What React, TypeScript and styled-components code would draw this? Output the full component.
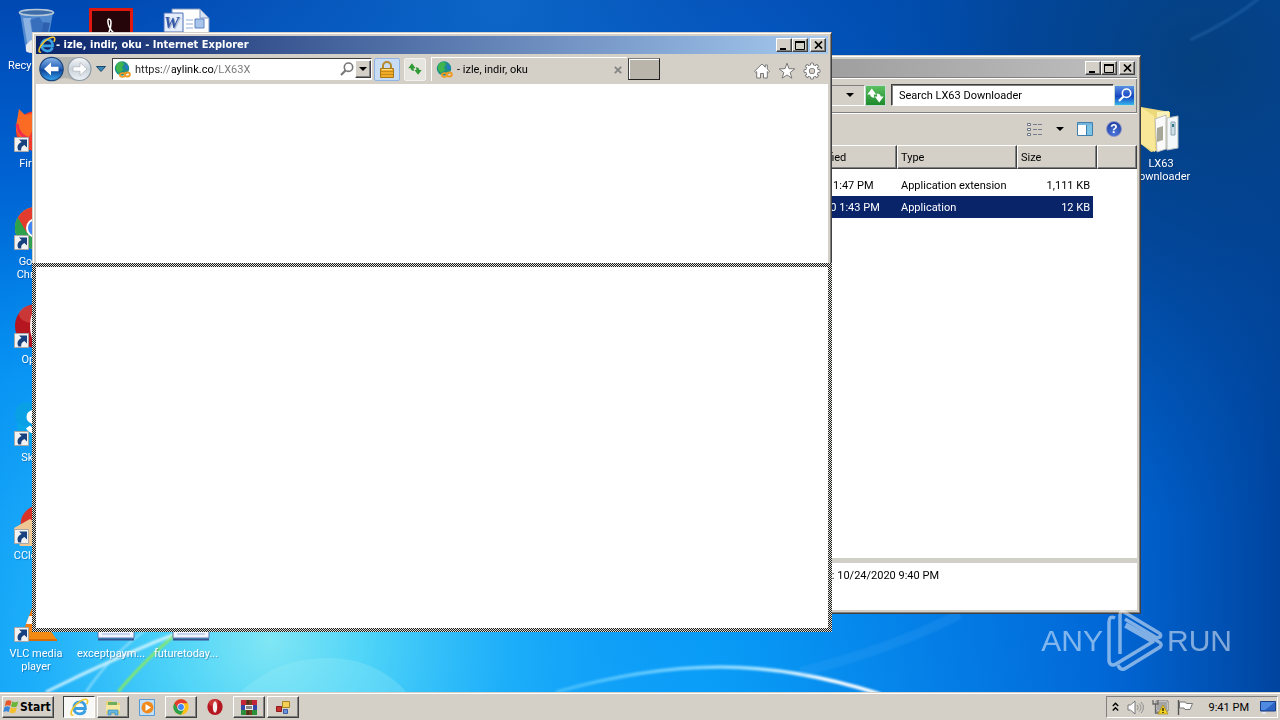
import React from "react";
import styled, { createGlobalStyle, css } from "styled-components";

const FACE = "#d4d0c8";

const GlobalStyle = createGlobalStyle`
  * { box-sizing: border-box; }
  body { margin: 0; font: 11px/13px Roboto, "Liberation Sans", sans-serif; color: #000; }
  button, input { font: inherit; color: inherit; padding: 0; margin: 0; border: 0; background: none; }
  button { cursor: default; }
  svg { display: block; flex: none; }
`;

/* ---------- shell ---------- */

const Screen = styled.div`
  display: flex;
  flex-direction: column;
  min-height: 100vh;
  overflow: hidden;
`;

const Desktop = styled.main`
  position: relative;
  flex: 1;
  min-height: 640px;
  overflow: hidden;
  background: #0a78e0;
`;

const WallpaperArt = styled.svg`
  position: absolute;
  inset: 0;
  width: 100%;
  height: 100%;
`;

const IconGrid = styled.div`
  position: relative;
  display: grid;
  grid-template-columns: repeat(16, 72px);
  grid-template-rows: repeat(7, 98px);
  column-gap: 3px;
`;

const Shortcut = styled.a<{ $col: number; $row: number }>`
  grid-column: ${(p) => p.$col};
  grid-row: ${(p) => p.$row};
  display: flex;
  flex-direction: column;
  align-items: center;
  gap: 3px;
  padding-top: 8px;
  color: #fff;
  text-align: center;
  text-decoration: none;
  text-shadow: 1px 1px 1px rgba(0, 30, 90, 0.35);
`;

const raised = css`
  border: 1px solid;
  border-color: #fff #404040 #404040 #fff;
  box-shadow: inset -1px -1px 0 #808080;
`;

const sunken = css`
  border: 1px solid;
  border-color: #808080 #fff #fff #808080;
`;

/* ---------- windows ---------- */

const WindowFrame = styled.section<{ $left: number; $top: number; $width: number; $height: number }>`
  position: absolute;
  left: ${(p) => p.$left}px;
  top: ${(p) => p.$top}px;
  width: ${(p) => p.$width}px;
  height: ${(p) => p.$height}px;
  display: flex;
  flex-direction: column;
  padding: 3px;
  background: ${FACE};
  border: 1px solid;
  border-color: ${FACE} #404040 #404040 ${FACE};
  box-shadow: inset 1px 1px 0 #fff, inset -1px -1px 0 #808080;
`;

const TitleBar = styled.header<{ $active?: boolean }>`
  display: flex;
  align-items: center;
  height: 18px;
  padding: 0 2px;
  color: #fff;
  font: bold 11px/18px "DejaVu Sans Condensed", "DejaVu Sans", sans-serif;
  background: ${(p) =>
    p.$active ? "linear-gradient(90deg, #0a246a, #a6caf0)" : "linear-gradient(90deg, #808080, #c0c0c0)"};
`;

const TitleText = styled.h1`
  flex: 1;
  margin: 0;
  font: inherit;
  white-space: nowrap;
`;

const CaptionButton = styled.button<{ $gap?: boolean }>`
  ${raised}
  display: grid;
  place-items: center;
  width: 16px;
  height: 14px;
  margin-left: ${(p) => (p.$gap ? 2 : 0)}px;
  background: ${FACE};
`;

const Page = styled.div`
  flex: 1;
  background: #fff;
`;

/* the checkered rectangle shown while a window is being dragged */
const DragOutline = styled.div`
  position: absolute;
  inset: 230px -1px -1px -1px;
  padding: 4px;
  background: repeating-conic-gradient(#e4e2dd 0 25%, #1c1c1c 0 50%) 0 0 / 2px 2px;
`;

const DragInside = styled.div`
  height: 100%;
  background: #fff;
`;

/* ---------- browser toolbar ---------- */

const BrowserBar = styled.div`
  display: flex;
  align-items: center;
  height: 30px;
  padding: 0 7px 0 3px;
`;

const NavButtons = styled.div`
  display: flex;
  align-items: center;
  gap: 1px;
  width: 73px;
`;

const AddressBox = styled.label`
  display: flex;
  align-items: center;
  width: 260px;
  height: 22px;
  padding: 1px 0 1px 1px;
  background: #fff;
  border: 1px solid;
  border-color: #404040 #fff #fff #404040;
`;

const AddressInput = styled.input`
  flex: 1;
  min-width: 0;
  height: 18px;
  margin-left: 4px;
  outline: 0;
  background: linear-gradient(90deg, #222 28px, #777 28px 37px, #000 37px 80px, #777 80px);
  background-clip: text;
  -webkit-background-clip: text;
  -webkit-text-fill-color: transparent;
`;

const DropButton = styled.button`
  ${raised}
  display: grid;
  place-items: center;
  width: 16px;
  height: 18px;
  margin-left: 1px;
  background: ${FACE};
`;

const BarTool = styled.button<{ $tone: "lock" | "reload" }>`
  display: grid;
  place-items: center;
  width: ${(p) => (p.$tone === "lock" ? 26 : 22)}px;
  height: 23px;
  margin-left: ${(p) => (p.$tone === "lock" ? 2 : 4)}px;
  border: 1px solid ${(p) => (p.$tone === "lock" ? "#8fb4e2" : "#f4f2ee")};
  border-radius: 2px;
  background: ${(p) => (p.$tone === "lock" ? "#c8dcf4" : "#e6e4de")};
`;

const Tab = styled.div`
  display: flex;
  align-items: center;
  width: 196px;
  height: 24px;
  margin-left: 5px;
  padding: 0 5px 0 4px;
  border: 1px solid #fff;
  border-width: 1px 0 0 1px;
`;

const TabTitle = styled.span`
  flex: 1;
  margin-left: 4px;
`;

const NewTab = styled.button`
  width: 32px;
  height: 22px;
  margin-left: 1px;
  background: #bab5ab;
  border: 1px solid;
  border-color: #808080 #202020 #202020 #404040;
  box-shadow: inset 1px 1px 0 #fff;
`;

const BrowserActions = styled.div`
  display: flex;
  gap: 7px;
  margin-left: auto;
  padding-top: 3px;
`;

/* ---------- file explorer ---------- */

const LocationRow = styled.div`
  display: flex;
  align-items: center;
  height: 36px;
  padding: 0 2px 0 4px;
  border-top: 1px solid #808080;
  border-bottom: 1px solid #808080;
  box-shadow: inset 0 1px 0 #fff, inset -1px 0 0 #808080, 0 1px 0 #fff;
`;

const PathBox = styled.div`
  ${sunken}
  display: flex;
  flex: 1;
  align-items: center;
  justify-content: flex-end;
  height: 21px;
  padding-right: 10px;
`;

const SearchInput = styled.input`
  width: 223px;
  height: 22px;
  margin-left: 5px;
  padding-left: 7px;
  background: #fff;
  border: 1px solid;
  border-color: #404040 #fff #fff #404040;
  box-shadow: inset 1px 1px 0 #808080;
  outline: 0;
  &::placeholder { color: #000; opacity: 1; }
`;

const ColorButton = styled.button<{ $color: string }>`
  display: grid;
  place-items: center;
  width: 21px;
  height: 21px;
  background: ${(p) => p.$color};
  border: 1px solid #c5dcd0;
`;

const CommandRow = styled.div`
  display: flex;
  align-items: center;
  justify-content: flex-end;
  height: 32px;
  padding-right: 15px;
  gap: 13px;
`;

const PlainButton = styled.button`
  display: block;
`;

const FileArea = styled.div`
  flex: 1;
  background: #fff;
`;

const FileTable = styled.table`
  width: 100%;
  table-layout: fixed;
  border-collapse: separate;
  border-spacing: 0;

  thead::after { content: ""; display: block; height: 5px; }
`;

const HeadCell = styled.th<{ $width?: number }>`
  ${raised}
  width: ${(p) => (p.$width ? `${p.$width}px` : "auto")};
  height: 24px;
  padding: 0 0 0 3px;
  font-weight: normal;
  text-align: left;
  background: ${FACE};
`;

const Row = styled.tr<{ $selected?: boolean }>`
  height: 22px;
  color: ${(p) => (p.$selected ? "#fff" : "#000")};
  td:not(:last-child) { background: ${(p) => (p.$selected ? "#0a246a" : "none")}; background-clip: padding-box; }
`;

const Cell = styled.td<{ $size?: boolean }>`
  padding: 0 3px 0 4px;
  text-align: ${(p) => (p.$size ? "right" : "left")};
  border-right: ${(p) => (p.$size ? "4px solid transparent" : "0")};
  white-space: nowrap;
`;

const Details = styled.footer`
  height: 52px;
  padding: 6px 198px 0 0;
  text-align: right;
  background: #fff;
  border-top: 5px solid #d0d0c8;
  white-space: nowrap;
`;

/* ---------- watermark ---------- */

const Watermark = styled.div`
  position: absolute;
  right: 48px;
  bottom: 20px;
  display: flex;
  align-items: center;
  gap: 4px;
  color: #fff;
  opacity: 0.5;
  font: 30px/62px "Liberation Sans", sans-serif;
`;

/* ---------- taskbar ---------- */

const Taskbar = styled.nav`
  display: flex;
  align-items: center;
  height: 28px;
  padding: 1px 2px 0 2px;
  background: ${FACE};
  border-top: 1px solid ${FACE};
  box-shadow: inset 0 1px 0 #fff;
`;

const StartButton = styled.button`
  ${raised}
  display: flex;
  align-items: center;
  width: 52px;
  height: 22px;
  margin-right: 9px;
  background: ${FACE};
  font: bold 12px/18px "DejaVu Sans Condensed", "DejaVu Sans", sans-serif;
`;

const TaskList = styled.div`
  display: flex;
  gap: 2px;
`;

const TaskButton = styled.button<{ $kind: "active" | "open" | "pinned" }>`
  display: grid;
  place-items: center;
  width: 32px;
  height: 22px;
  ${(p) => p.$kind === "open" && raised}
  ${(p) =>
    p.$kind === "active" &&
    css`
      border: 1px solid;
      border-color: #404040 #fff #fff #404040;
      background: #f8f8f6;
    `}
`;

const Tray = styled.div`
  ${sunken}
  display: flex;
  align-items: center;
  height: 22px;
  margin-left: auto;
  padding: 0 1px 0 5px;
  gap: 8px;
`;

const Clock = styled.time`
  margin: 0 3px 0 7px;
`;

/* ---------- icons ---------- */

const Triangle = ({ color = "#000" }: { color?: string }) => (
  <svg width="8" height="4" viewBox="0 0 8 4"><path d="M0 0h8L4 4z" fill={color} /></svg>
);

const MinGlyph = () => <svg width="10" height="9"><path d="M1 7h6v2H1z" /></svg>;
const MaxGlyph = () => <svg width="10" height="9"><path d="M.5 1h9v7.5h-9z" fill="none" stroke="#000" /><path d="M0 0h10v2H0z" /></svg>;
const CloseGlyph = () => <svg width="9" height="8" viewBox="0 0 9 8"><path d="M1 .5l7 7M8 .5l-7 7" stroke="#000" strokeWidth="1.7" /></svg>;

const Captions = () => (
  <>
    <CaptionButton aria-label="Minimize"><MinGlyph /></CaptionButton>
    <CaptionButton aria-label="Maximize"><MaxGlyph /></CaptionButton>
    <CaptionButton aria-label="Close" $gap><CloseGlyph /></CaptionButton>
  </>
);

const IeLogo = ({ size }: { size: number }) => (
  <svg width={size} height={size} viewBox="0 0 20 20">
    <path d="M4.6 11h11.6c.3-4-2-6.900-5.900-6.900-3.600 0-6.200 2.700-6.200 6.300s2.600 6.300 6.300 6.300c2.700 0 4.800-1.400 5.600-3.800" fill="none" stroke="#3b9fe2" strokeWidth="3" />
    <path d="M3.500 18C.4 18.800.3 15 3.400 10.500 7.300 4.900 14 .5 17.300 1.500c2 .6 1.600 3 .3 5" fill="none" stroke="#f3c62c" strokeWidth="1.700" />
  </svg>
);

const Globe = () => (
  <svg width="17" height="17" viewBox="0 0 17 17">
    <circle cx="8" cy="7.500" r="7.200" fill="#1c8f86" />
    <path d="M3 3c3-3 6-2 7 0L8 6l1 3-4 3C2 10 1 6 3 3z" fill="#3fb54f" />
    <path d="M11 3c3 1 4 4 3 6l-3-2z" fill="#2878c8" />
    <g fill="none" stroke="#f09a24" strokeWidth="1.800">
      <ellipse cx="8.500" cy="14" rx="2.600" ry="1.800" /><ellipse cx="13.300" cy="13.500" rx="2.600" ry="2" />
    </g>
  </svg>
);

const BackForward = () => (
  <svg width="56" height="26" viewBox="0 0 56 26">
    <defs>
      <linearGradient id="back" x1="0" y1="0" x2="0" y2="1"><stop offset="0" stopColor="#8bb6e8" /><stop offset=".45" stopColor="#2a68bd" /><stop offset=".55" stopColor="#0d459c" /><stop offset="1" stopColor="#38a8f0" /></linearGradient>
      <linearGradient id="fwd" x1="0" y1="0" x2="0" y2="1"><stop offset="0" stopColor="#f7f8fa" /><stop offset=".5" stopColor="#c9d2da" /><stop offset="1" stopColor="#eef3f7" /></linearGradient>
    </defs>
    <path d="M12 1h28a12 12 0 0 1 0 24c-7 0-9-3-14-3s-7 3-14 3z" fill="#b4b4b0" />
    <circle cx="12.500" cy="13" r="11.700" fill="url(#back)" stroke="#1e477f" strokeWidth="1.200" />
    <path d="M5 13l7-6.500v4.300h7.500v4.400H12v4.300z" fill="#fff" />
    <circle cx="40.500" cy="13" r="11.500" fill="url(#fwd)" stroke="#8f9aa4" strokeWidth="1.200" />
    <path d="M48 13l-7-6.500v4.300h-7v4.400h7v4.300z" fill="#fff" stroke="#a9b2ba" strokeWidth=".7" />
  </svg>
);

const Magnifier = ({ color = "#777", size = 14 }: { color?: string; size?: number }) => (
  <svg width={size} height={size} viewBox="0 0 14 14" fill="none" stroke={color}>
    <circle cx="8.500" cy="5.200" r="4.200" strokeWidth="1.600" /><path d="M5.500 8.500L1 13" strokeWidth="2.200" />
  </svg>
);

const Padlock = () => (
  <svg width="14" height="17" viewBox="0 0 14 17">
    <path d="M3 8V5a4 4 0 0 1 8 0v3" fill="none" stroke="#b58a2c" strokeWidth="2" />
    <path d="M.5 7.500h13v9H.5z" fill="#f0ac28" stroke="#a87818" />
    <path d="M1 10.500h12M1 13.500h12" stroke="#c88a18" /><path d="M2 8.500h10" stroke="#ffe08a" />
  </svg>
);

const ReloadArrows = ({ color = "#2f9a36", size = 14 }: { color?: string; size?: number }) => (
  <svg width={size} height={size} viewBox="0 0 16 16" fill={color}>
    <path d="M4.500 1.500L.3 7H3c.3 2 1.500 3 4 3L6.300 7h2.400z" />
    <path d="M11.500 14.500L15.700 9H13c-.3-2-1.500-3-4-3l.7 3H7.300z" />
  </svg>
);

const HomeIcon = () => (
  <svg width="18" height="18" viewBox="0 0 18 18"><path d="M9 2L1.500 9.200l1.200 1.300 1-.9V16h3.800v-4.500h3V16h3.800V9.600l1 .9 1.200-1.300-2.200-2.100V3h-2v2.200z" fill="#fff" stroke="#777" /></svg>
);
const StarIcon = () => (
  <svg width="18" height="18" viewBox="0 0 18 18"><path d="M9 1.200l2 5.500 5.800.2-4.600 3.600 1.600 5.700L9 12.900l-4.800 3.300 1.600-5.700L1.200 6.900 7 6.700z" fill="#fff" stroke="#777" /></svg>
);

const teeth = [0, 45, 90, 135, 180, 225, 270, 315];
const GearIcon = () => (
  <svg width="18" height="18" viewBox="0 0 18 18">
    {teeth.map((a) => <path key={a} d="M7.300 4l.5-3h2.400l.5 3z" fill="#fff" stroke="#777" transform={`rotate(${a} 9 9)`} />)}
    <circle cx="9" cy="9" r="4.400" fill="none" stroke="#777" strokeWidth="4.200" />
    <circle cx="9" cy="9" r="4.500" fill="none" stroke="#fff" strokeWidth="2.800" />
    {teeth.map((a) => <path key={a} d="M8 4.500l.3-2.800h1.400l.3 2.800z" fill="#fff" transform={`rotate(${a} 9 9)`} />)}
  </svg>
);

const ListIcon = () => (
  <svg width="16" height="13" viewBox="0 0 16 13">
    {[0, 5, 10].map((y) => (
      <g key={y}><path d={`M.5 ${y + 0.5}h3v2h-3z`} fill="#fff" stroke="#6b7484" /><path d={`M6 ${y + 1.5}h4m1 0h4`} stroke="#757d8c" /></g>
    ))}
  </svg>
);

const PaneIcon = () => (
  <svg width="16" height="14" viewBox="0 0 16 14">
    <path d="M.5.5h15v13H.5z" fill="#fff" stroke="#3f7fae" /><path d="M1 1h14v2H1z" fill="#73b4dc" /><path d="M10 3h5v10h-5z" fill="#7cc4e4" /><path d="M9.500 3v10" stroke="#3f7fae" />
  </svg>
);

const QuestionText = styled.span`
  display: grid;
  place-items: center;
  width: 16px;
  height: 16px;
  border: 1px solid #8794cb;
  border-radius: 50%;
  color: #fff;
  font: bold 12px/14px "Liberation Sans", sans-serif;
  background: radial-gradient(circle at 50% 80%, #4c78dc, #1b3596);
`;

const LinkBadge = () => (
  <g>
    <path d="M2.500 31.500h14v14h-14z" fill="#f2f2f2" stroke="#a8a8a8" />
    <path d="M7 33.500h8v8l-2.600-2.600c-2.400 1-3.400 2.600-3.200 5.600H6.500C4.400 41 5.800 37.500 9.600 36z" fill="#17427f" />
  </g>
);

const ShortcutArt = ({ link, children }: { link?: boolean; children: React.ReactNode }) => (
  <svg width="48" height="48" viewBox="0 0 48 48">{children}{link && <LinkBadge />}</svg>
);

const RecycleArt = () => (
  <ShortcutArt>
    <path d="M8 5l6 38c1 3 19 3 20 0l7-38z" fill="#5f94d2" fillOpacity=".85" />
    <path d="M11 10l5 30 6-4-3-26z" fill="#b4cfec" fillOpacity=".6" /><path d="M18 12l9-3 6 8-4 10-9-3z" fill="#2e65b5" fillOpacity=".7" /><path d="M32 14l6 1-4 18-5-3z" fill="#2458a8" fillOpacity=".8" />
    <path d="M14 37l5-5 8 4 6-3-1 10c-3 3-16 3-18 0z" fill="#e6e9ee" />
    <ellipse cx="24.500" cy="4.500" rx="17" ry="3" fill="#3d6ca8" stroke="#b4c8da" strokeWidth="1.600" />
  </ShortcutArt>
);

const AcrobatArt = () => (
  <ShortcutArt>
    <path d="M2 0h44v48H2z" fill="#e0190f" /><path d="M5 3h38v45H5z" fill="#25050a" />
    <path d="M15 34c6-6 9-13 9-19 0-5-4-5-3-1 0 6 7 14 13 16" fill="none" stroke="#fff" strokeWidth="1.500" />
  </ShortcutArt>
);

const LetterW = styled.text`
  font: italic bold 17px "Liberation Serif", serif;
  fill: #3457a8;
`;

const WordArt = () => (
  <ShortcutArt>
    <path d="M10 1h28l9 9v38H10z" fill="#fff" stroke="#7c95bd" /><path d="M38 1v9h9z" fill="#d7e3f5" stroke="#7c95bd" />
    <path d="M24 12h7M24 16h7M24 20h7M24 25h20" stroke="#93add8" /><path d="M33 11h9v9h-9z" fill="#a9c4ea" stroke="#5b82c0" />
    <path d="M2 5h19v19H2z" fill="#e6eefb" stroke="#4a6cb4" /><LetterW x="2" y="20">W</LetterW>
  </ShortcutArt>
);

const PaperArt = () => (
  <ShortcutArt>
    <path d="M11 2h36v40H11z" fill="#eef3fc" stroke="#5b77b4" /><path d="M15 34h28M15 38h28" stroke="#9fb3dc" /><path d="M11 43.500h36" stroke="#39558f" strokeWidth="2" />
  </ShortcutArt>
);

const FirefoxArt = () => (
  <ShortcutArt link>
    <circle cx="24" cy="25" r="20" fill="#f23a2a" /><path d="M4 20L7 3l6 6 9-2 2 10-8 16C8 34 3 26 4 20z" fill="#fb6b23" /><path d="M20 20c4-4 8-4 12 0v14H20z" fill="#8b2ac4" /><path d="M5 18c1 8 5 13 13 15" stroke="#f0304a" strokeWidth="3" fill="none" />
  </ShortcutArt>
);

const ChromeMark = () => (
  <g>
    <circle cx="24" cy="24" r="21" fill="#fbc116" />
    <path d="M5.800 13.500A21 21 0 0 0 24 45L33 29 24 24z" fill="#2da14c" />
    <path d="M5.800 13.500A21 21 0 0 1 42.200 13.500H24L15 29z" fill="#e33b2e" />
    <circle cx="24" cy="24" r="10" fill="#fff" /><circle cx="24" cy="24" r="8" fill="#4285f4" />
  </g>
);

const OperaMark = () => (
  <g><ellipse cx="24" cy="24" rx="21" ry="22" fill="#b51620" /><ellipse cx="20" cy="12" rx="13" ry="9" fill="#e0584e" fillOpacity=".5" /><ellipse cx="24" cy="24" rx="6" ry="16" fill="#f5f1f0" /></g>
);

const SkypeArt = () => (
  <ShortcutArt link>
    <circle cx="24" cy="24" r="19" fill="#0aa6ea" /><circle cx="15" cy="14" r="12" fill="#0aa0e6" />
    <path d="M31 15c-4-4-14-4-14 2 0 7 15 4 15 10 0 6-12 6-16 0" fill="none" stroke="#fff" strokeWidth="5" />
  </ShortcutArt>
);

const CleanerArt = () => (
  <ShortcutArt link>
    <path d="M36 8A20 20 0 0 0 9 30l10-2a10 10 0 0 1 10-11z" fill="#d9342a" /><path d="M2 30l16-9 10 7-6 20H8z" fill="#efc795" />
  </ShortcutArt>
);

const VlcArt = () => (
  <ShortcutArt link>
    <path d="M24 1l14 38H10z" fill="#f47a12" /><path d="M17 20h14l3 8H14z" fill="#f6f3ee" /><path d="M10 34h28l7 10H3z" fill="#f08a12" /><path d="M3 43h42v2H3z" fill="#d86a08" />
  </ShortcutArt>
);

const FolderArt = () => (
  <ShortcutArt>
    <path d="M4 1l29 5v36L14 46 4 38z" fill="#ecd97c" /><path d="M20 6l12-1v8l-12 4z" fill="#fbf2b8" />
    <path d="M18 13l11-4v34l-9 3z" fill="#fafafa" stroke="#bbb" /><path d="M20 22l6-2v14l-6 2z" fill="#a8a89a" />
    <path d="M30 12l11-2v32l-11 2z" fill="#f5f8fa" stroke="#b5bcc2" /><path d="M34 16h4v13h-4z" fill="#d2dde4" stroke="#8ba6b4" /><path d="M35 18h2v3h-2z" fill="#2e7a8c" />
    <path d="M4 1l13 9 1 36L4 38z" fill="#f8e897" />
  </ShortcutArt>
);

const WindowsFlag = () => (
  <svg width="17" height="16" viewBox="0 0 17 16">
    <path d="M3 2c2-1.300 4-1 5.500 0L7.300 7C5.600 6 4 6 1.800 7z" fill="#e8572a" /><path d="M9.300 2.400c2 1 3.800 1 6-.2L14 7.300c-2 1.200-4 1-6 .1z" fill="#6cb53a" />
    <path d="M1.500 8c2-1.200 4-1 5.600 0L5.800 13c-1.700-1-3.600-1-5.500 0z" fill="#3b86d8" /><path d="M7.800 8.300c2 1 4 1 6-.1L12.500 13.300c-2 1.200-4 1.100-6 .1z" fill="#f3bf2c" />
  </svg>
);

const FolderTask = () => (
  <svg width="18" height="18" viewBox="0 0 18 18"><path d="M2 3h6l1 2h7v11H2z" fill="#ecd377" /><path d="M4 4h9v4H4z" fill="#6cae5c" /><path d="M2 7h14v6H2z" fill="#f6e8a2" /><path d="M4 17v-5h10v5h-3v-2H7v2z" fill="#66b5e0" stroke="#2f84b8" strokeWidth=".6" /></svg>
);

const MediaTask = () => (
  <svg width="17" height="17" viewBox="0 0 17 17"><path d="M.5.500h15v16H.5z" fill="#c2dff6" stroke="#5a9ad4" /><circle cx="8.500" cy="8.500" r="6" fill="#f08a1c" /><path d="M6.500 5l5.500 3.500-5.500 3.500z" fill="#fff" /></svg>
);

const ArchiveTask = () => (
  <svg width="18" height="17" viewBox="0 0 18 17"><path d="M1 1h16v5H1z" fill="#c22638" /><path d="M1 6h16v5H1z" fill="#3548a8" /><path d="M1 11h16v5H1z" fill="#2c8f3a" /><path d="M6 1h6v15H6z" fill="#70401c" /><path d="M5 6h8v5H5z" fill="#eee" /><path d="M7 7v3M9 7v3M11 7v3M8 1v4M8 12v4" stroke="#222" /></svg>
);

const FormsTask = () => (
  <svg width="18" height="17" viewBox="0 0 18 17"><path d="M2.500 7.500h5v5h-5z" fill="#c93030" stroke="#8b1c1c" /><path d="M8.500 2.500h7v6h-7z" fill="#f3cf57" stroke="#a88420" /><path d="M9.500 10.500h4v4h-4z" fill="#6d93dc" stroke="#3b5ba5" /></svg>
);

const ChevronIcon = () => <svg width="7" height="10" viewBox="0 0 7 10" fill="none" stroke="#000" strokeWidth="1.400"><path d="M.8 4l2.700-2.700L6.200 4M.8 8.500l2.700-2.700L6.200 8.500" /></svg>;
const SpeakerIcon = () => (
  <svg width="17" height="15" viewBox="0 0 17 15"><path d="M1 5h2.500L8 1v13l-4.500-4H1z" fill="#fff" stroke="#777" /><path d="M10 5c1.500 1.500 1.500 3.500 0 5M12 3.500c2.500 2.500 2.500 5.500 0 8M14 2c3.200 3.500 3.200 7.500 0 11" fill="none" stroke="#888" /></svg>
);
const NetworkIcon = () => (
  <svg width="17" height="16" viewBox="0 0 17 16"><path d="M4.500 2.500h11v9h-11z" fill="#a4a4a4" stroke="#fff" /><path d="M4 2h12v10H4z" fill="none" stroke="#555" strokeWidth=".7" /><path d="M1 1v4h5V1M3.500 5v9H7" fill="none" stroke="#666" strokeWidth="1.300" /><path d="M11 6l5 9H6z" fill="#f5d120" stroke="#a88a10" strokeWidth=".7" /><path d="M11 9v3m0 1v1" stroke="#000" strokeWidth="1.200" /></svg>
);
const FlagIcon = () => (
  <svg width="17" height="15" viewBox="0 0 17 15"><path d="M2.500 2h6l1 1.500h6l-2.500 6H8L7 8H2.500z" fill="#fff" stroke="#777" /><path d="M1.500 0v15" stroke="#555" strokeWidth="1.400" /></svg>
);
const MonitorIcon = () => (
  <svg width="16" height="13" viewBox="0 0 16 13"><path d="M.5.500h15v9.500H.5z" fill="#2b62c4" stroke="#173e86" /><path d="M1 1h14L5 9H1z" fill="#4f8ae0" /><path d="M2 12h4" stroke="#e8eef8" strokeWidth="1.500" /></svg>
);

const PlayLogo = () => (
  <svg width="56" height="62" viewBox="0 0 56 62" fill="none" stroke="#fff" strokeWidth="3.500">
    <path d="M8 8c-4-2-6 0-6 4v38c0 5 4 6 7 4l38-23" /><path d="M13 44V5c0-3 2-4 4-3l35 21c2 1 2 3 1 4l-3 1L18 9" /><path d="M18 16l28 16M11 55c2 5 5 5 8 3l34-21c2-2 1-4-1-5L19 14" />
  </svg>
);

const Wallpaper = () => (
  <WallpaperArt viewBox="0 0 1280 692" preserveAspectRatio="none" aria-hidden="true">
    <defs>
      <linearGradient id="sky" x1="0" y1="0" x2="0" y2="1">
        <stop offset="0" stopColor="#0048b2" /><stop offset=".25" stopColor="#0062d2" /><stop offset=".55" stopColor="#0090f0" /><stop offset="1" stopColor="#0aa0f8" />
      </linearGradient>
      <linearGradient id="side" x1="0" y1="0" x2="1" y2="0">
        <stop offset=".55" stopColor="#0062dc" stopOpacity="0" /><stop offset=".86" stopColor="#0062d4" stopOpacity=".9" /><stop offset="1" stopColor="#00449e" />
      </linearGradient>
      <radialGradient id="glow" gradientUnits="userSpaceOnUse" cx="270" cy="640" r="480">
        <stop offset="0" stopColor="#80e6f4" /><stop offset=".2" stopColor="#4fd4f8" /><stop offset=".5" stopColor="#22b2fa" stopOpacity=".8" /><stop offset="1" stopColor="#0a8cf8" stopOpacity="0" />
      </radialGradient>
      <radialGradient id="top" gradientUnits="userSpaceOnUse" cx="500" cy="0" r="420">
        <stop offset="0" stopColor="#0c66c8" /><stop offset="1" stopColor="#0c60c4" stopOpacity="0" />
      </radialGradient>
      <radialGradient id="corner" gradientUnits="userSpaceOnUse" cx="1200" cy="60" r="460">
        <stop offset="0" stopColor="#05407f" /><stop offset=".4" stopColor="#034290" stopOpacity=".85" /><stop offset="1" stopColor="#0048a0" stopOpacity="0" />
      </radialGradient>
      <linearGradient id="arc" x1="0" y1="0" x2="1" y2="0">
        <stop offset="0" stopColor="#6ad2ff" stopOpacity=".5" /><stop offset=".6" stopColor="#9fe0ff" /><stop offset=".85" stopColor="#fff" /><stop offset="1" stopColor="#fff" />
      </linearGradient>
      <filter id="soft"><feGaussianBlur stdDeviation="1" /></filter>
    </defs>
    <path d="M0 0h1280v692H0z" fill="url(#sky)" />
    <path d="M0 0h1280v692H0z" fill="url(#side)" />
    <path d="M0 0h1280v692H0z" fill="url(#glow)" />
    <path d="M0 0h1280v692H0z" fill="url(#top)" />
    <path d="M0 0h1280v692H0z" fill="url(#corner)" />
    <path d="M240 692c30-26 55-34 90-34 30 0 60 14 76 34z" fill="#a4f0f8" opacity=".25" />
    <g fill="none" filter="url(#soft)">
      <path d="M46 692Q120 655 190 628" stroke="#e6fbff" strokeWidth="3" opacity=".8" />
      <path d="M86 692Q110 656 148 628" stroke="#c8f4ff" strokeWidth="2" opacity=".6" />
      <path d="M118 692Q144 660 190 622" stroke="#8cec5c" strokeWidth="2.500" />
      <path d="M556 692Q645 667 720 667T880 694" stroke="url(#arc)" strokeWidth="3.500" />
      <path d="M800 672Q890 650 960 614" stroke="#58b4ff" strokeWidth="10" opacity=".15" />
      <path d="M1190 40Q1230 22 1262 -4" stroke="#4a90d8" strokeWidth="3" opacity=".25" />
    </g>
  </WallpaperArt>
);

const shortcuts: { name: string; label?: string; col: number; row: number; art: React.ReactNode }[] = [
  { name: "Recycle Bin", label: "Recycle Bin", col: 1, row: 1, art: <RecycleArt /> },
  { name: "Acrobat Reader", col: 2, row: 1, art: <AcrobatArt /> },
  { name: "Document", col: 3, row: 1, art: <WordArt /> },
  { name: "Firefox", label: "Firefox", col: 1, row: 2, art: <FirefoxArt /> },
  { name: "LX63 Downloader", label: "LX63 Downloader", col: 16, row: 2, art: <FolderArt /> },
  { name: "Google Chrome", label: "Google Chrome", col: 1, row: 3, art: <ShortcutArt link><ChromeMark /></ShortcutArt> },
  { name: "Opera", label: "Opera", col: 1, row: 4, art: <ShortcutArt link><OperaMark /></ShortcutArt> },
  { name: "Skype", label: "Skype", col: 1, row: 5, art: <SkypeArt /> },
  { name: "CCleaner", label: "CCleaner", col: 1, row: 6, art: <CleanerArt /> },
  { name: "VLC media player", label: "VLC media player", col: 1, row: 7, art: <VlcArt /> },
  { name: "exceptpaym...", label: "exceptpaym...", col: 2, row: 7, art: <PaperArt /> },
  { name: "futuretoday...", label: "futuretoday...", col: 3, row: 7, art: <PaperArt /> },
];

const Explorer = () => (
  <WindowFrame $left={541} $top={55} $width={600} $height={559} aria-label="LX63 Downloader">
    <TitleBar><TitleText /><Captions /></TitleBar>
    <LocationRow>
      <PathBox><Triangle /></PathBox>
      <ColorButton $color="linear-gradient(#5cc062, #1d8a2c)" aria-label="Refresh"><ReloadArrows color="#fff" size={17} /></ColorButton>
      <SearchInput aria-label="Search" placeholder="Search LX63 Downloader" />
      <ColorButton $color="linear-gradient(#5a90e6, #1746c0 55%, #36b4ee)" aria-label="Go"><Magnifier color="#fff" /></ColorButton>
    </LocationRow>
    <CommandRow>
      <PlainButton aria-label="View"><ListIcon /></PlainButton>
      <PlainButton aria-label="More view options"><Triangle /></PlainButton>
      <PlainButton aria-label="Preview pane"><PaneIcon /></PlainButton>
      <PlainButton><QuestionText>?</QuestionText></PlainButton>
    </CommandRow>
    <FileArea>
      <FileTable>
        <thead>
          <tr><HeadCell /><HeadCell $width={123}>Date modified</HeadCell><HeadCell $width={120}>Type</HeadCell><HeadCell $width={80}>Size</HeadCell><HeadCell $width={40} /></tr>
        </thead>
        <tbody>
          <Row><Cell /><Cell>9/21/2020 1:47 PM</Cell><Cell>Application extension</Cell><Cell $size>1,111 KB</Cell><Cell /></Row>
          <Row $selected><Cell /><Cell>10/21/2020 1:43 PM</Cell><Cell>Application</Cell><Cell $size>12 KB</Cell><Cell /></Row>
        </tbody>
      </FileTable>
    </FileArea>
    <Details>Date created: 10/24/2020 9:40 PM</Details>
  </WindowFrame>
);

const Browser = () => (
  <WindowFrame $left={32} $top={32} $width={800} $height={600} aria-label="Internet Explorer">
    <TitleBar $active>
      <IeLogo size={18} />
      <TitleText>- izle, indir, oku - Internet Explorer</TitleText>
      <Captions />
    </TitleBar>
    <BrowserBar>
      <NavButtons>
        <PlainButton aria-label="Back and forward"><BackForward /></PlainButton>
        <PlainButton aria-label="Recent pages"><svg width="10" height="6" viewBox="0 0 10 6"><path d="M.5.500h9L5 5.500z" fill="#3a86b8" stroke="#1d4a6c" /></svg></PlainButton>
      </NavButtons>
      <AddressBox>
        <Globe />
        <AddressInput aria-label="Address" defaultValue="https://aylink.co/LX63X" />
        <Magnifier />
        <DropButton aria-label="Show address list"><Triangle /></DropButton>
      </AddressBox>
      <BarTool $tone="lock" aria-label="Security report"><Padlock /></BarTool>
      <BarTool $tone="reload" aria-label="Reload"><ReloadArrows /></BarTool>
      <Tab>
        <Globe />
        <TabTitle>- izle, indir, oku</TabTitle>
        <PlainButton aria-label="Close tab"><svg width="8" height="8" viewBox="0 0 8 8"><path d="M.8.800l6.400 6.400M7.200.800L.8 7.200" stroke="#858585" strokeWidth="1.800" /></svg></PlainButton>
      </Tab>
      <NewTab aria-label="New tab" />
      <BrowserActions>
        <PlainButton aria-label="Home"><HomeIcon /></PlainButton>
        <PlainButton aria-label="Favorites"><StarIcon /></PlainButton>
        <PlainButton aria-label="Tools"><GearIcon /></PlainButton>
      </BrowserActions>
    </BrowserBar>
    <Page />
    <DragOutline><DragInside /></DragOutline>
  </WindowFrame>
);

export default function App() {
  return (
    <Screen>
      <GlobalStyle />
      <Desktop>
        <Wallpaper />
        <IconGrid>
          {shortcuts.map((s) => (
            <Shortcut key={s.name} href="#" aria-label={s.name} $col={s.col} $row={s.row}>
              {s.art}
              {s.label}
            </Shortcut>
          ))}
        </IconGrid>
        <Explorer />
        <Browser />
        <Watermark><span>ANY</span><PlayLogo /><span>RUN</span></Watermark>
      </Desktop>
      <Taskbar>
        <StartButton><WindowsFlag />Start</StartButton>
        <TaskList>
          <TaskButton $kind="active" aria-label="Internet Explorer"><IeLogo size={19} /></TaskButton>
          <TaskButton $kind="open" aria-label="File Explorer"><FolderTask /></TaskButton>
          <TaskButton $kind="pinned" aria-label="Media Player"><MediaTask /></TaskButton>
          <TaskButton $kind="open" aria-label="Chrome"><svg width="16" height="16" viewBox="2 2 44 44"><ChromeMark /></svg></TaskButton>
          <TaskButton $kind="pinned" aria-label="Opera"><svg width="16" height="16" viewBox="2 2 44 44"><OperaMark /></svg></TaskButton>
          <TaskButton $kind="open" aria-label="WinRAR"><ArchiveTask /></TaskButton>
          <TaskButton $kind="open" aria-label="Application"><FormsTask /></TaskButton>
        </TaskList>
        <Tray>
          <ChevronIcon />
          <SpeakerIcon />
          <NetworkIcon />
          <FlagIcon />
          <Clock>9:41 PM</Clock>
          <MonitorIcon />
        </Tray>
      </Taskbar>
    </Screen>
  );
}
